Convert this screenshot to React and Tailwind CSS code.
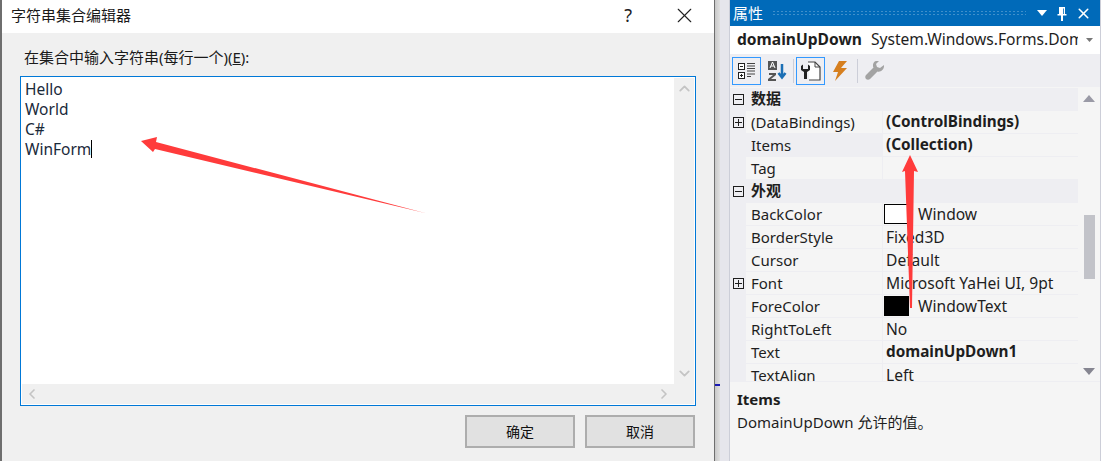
import React from 'react';
import { ChevronUp, ChevronDown, ChevronLeft, ChevronRight, X } from 'lucide-react';

const cjk = { fontFamily: '"Noto Sans", "Noto Sans CJK SC", sans-serif' };

const Expander = ({ open }) => (
  <span className="w-[11px] h-[11px] border border-[#1e1e1e] relative block shrink-0">
    <span className="absolute left-[1px] right-[1px] top-[4px] h-px bg-[#1e1e1e]"></span>
    {!open && <span className="absolute top-[1px] bottom-[1px] left-[4px] w-px bg-[#1e1e1e]"></span>}
  </span>
);

const Category = ({ title }) => (
  <div className="h-[23px] flex items-center bg-[#eeeef2]">
    <div className="w-[16px] flex justify-center"><Expander open /></div>
    <span className="ml-[5px] pb-[2px] font-bold text-[#1e1e1e]">{title}</span>
  </div>
);

const Row = ({ name, value, bold, plus, swatch, active }) => (
  <div className="h-[23px] flex bg-[#eeeef2]">
    <div className="w-[16px] flex justify-center items-center">{plus && <Expander />}</div>
    <div className={`w-[136px] border-b border-[#eeeef2] pl-[5px] flex items-center ${active ? 'bg-[#eeeef2]' : 'bg-[#f5f5f5]'}`}>{name}</div>
    <div className={`w-[195px] ml-px border-b border-[#eeeef2] bg-[#f5f5f5] pl-[3px] flex items-center whitespace-nowrap ${bold ? 'font-bold text-[15.3px] pb-px' : 'text-[15.6px] pt-[2px]'}`}>
      {swatch && <span className={`w-[25px] h-[20px] -ml-[2px] mr-[9px] -mt-[2px] border border-black shrink-0 ${swatch}`}></span>}
      {value}
    </div>
  </div>
);

const rowsA = [
  { name: '(DataBindings)', value: '(ControlBindings)', bold: true, plus: true },
  { name: 'Items', value: '(Collection)', bold: true, active: true },
  { name: 'Tag', value: '' },
];

const rowsB = [
  { name: 'BackColor', value: 'Window', swatch: 'bg-white' },
  { name: 'BorderStyle', value: 'Fixed3D' },
  { name: 'Cursor', value: 'Default' },
  { name: 'Font', value: 'Microsoft YaHei UI, 9pt', plus: true },
  { name: 'ForeColor', value: 'WindowText', swatch: 'bg-black' },
  { name: 'RightToLeft', value: 'No' },
  { name: 'Text', value: 'domainUpDown1', bold: true },
  { name: 'TextAlign', value: 'Left' },
];

const Dialog = () => (
  <div className="w-[715px] h-full shrink-0 flex flex-col bg-[#f0f0f0] border-l-2 border-r border-[#6e6e6e]">
    <div className="h-[33px] pb-[2px] bg-white flex items-center justify-between shrink-0">
      <span className="ml-[9px] text-[15px] text-[#1a1a1a]">字符串集合编辑器</span>
      <div className="flex items-center">
        <span className="text-[18px] text-[#222] mr-[40px]">?</span>
        <X size={25} strokeWidth={1.1} className="mr-[17px] text-[#222]" />
      </div>
    </div>
    <div className="pl-[22px] pt-[13px] text-[15px] leading-[22px] text-[#1a1a1a] h-[43px] shrink-0">
      在集合中输入字符串(每行一个)(<span className="underline">E</span>):
    </div>
    <div className="ml-[18px] w-[676px] h-[330px] border border-[#0078d7] p-px bg-white flex flex-col shrink-0">
      <div className="flex-1 flex min-h-0">
        <div className="flex-1 pl-[3px] pt-[1px] text-[15.5px] leading-[20px] text-[#1a2a3a]">
          <div>Hello</div>
          <div>World</div>
          <div>C#</div>
          <div className="flex items-center">WinForm<span className="w-px h-[18px] bg-black"></span></div>
        </div>
        <div className="w-[20px] bg-[#f0f0f0] flex flex-col justify-between items-center py-[2px]">
          <ChevronUp size={17} strokeWidth={2.5} className="text-[#c4c4c4]" />
          <ChevronDown size={17} strokeWidth={2.5} className="text-[#c4c4c4]" />
        </div>
      </div>
      <div className="h-[20px] bg-[#f0f0f0] flex justify-between items-center pl-[2px] shrink-0">
        <ChevronLeft size={16} strokeWidth={2.5} className="text-[#c4c4c4]" />
        <ChevronRight size={16} strokeWidth={2.5} className="text-[#c4c4c4] mr-[22px]" />
      </div>
    </div>
    <div className="flex justify-end gap-[10px] mt-[9px] mr-[19px]">
      <button className="w-[110px] h-[33px] bg-[#e1e1e1] border-2 border-[#adadad] text-[14px] text-[#111]">确定</button>
      <button className="w-[110px] h-[33px] bg-[#e1e1e1] border-2 border-[#adadad] text-[14px] text-[#111]">取消</button>
    </div>
  </div>
);

const Toolbar = () => (
  <div className="h-[33px] bg-[#eeeef2] flex items-center pl-[2px] shrink-0">
    <span className="w-[29px] h-[28px] border border-[#3399ff] flex items-center justify-center">
      <svg width="18" height="18" viewBox="0 0 18 18">
        <rect x="0.5" y="1.5" width="6" height="6" fill="#fff" stroke="#222" />
        <rect x="0.5" y="10.5" width="6" height="6" fill="#fff" stroke="#222" />
        <path d="M2 4.500h3M2 13.500h3M3.500 12v3" stroke="#222" />
        <path d="M9 1.500h8M9 4h8M9 6.500h8M9 9h8M9 12h8M9 14.500h4" stroke="#444" />
      </svg>
    </span>
    <span className="w-[31px] h-[28px] flex items-center justify-center">
      <svg width="20" height="22" viewBox="0 0 20 22">
        <rect x="1" y="1" width="9" height="9" fill="#555" />
        <path d="M3 8l2.500-6 2.500 6M4 6h3" stroke="#fff" fill="none" />
        <path d="M2 13h7v2l-5 4h5v2H1v-2l5-4H2z" fill="#555" />
        <path d="M15 4v13M11.500 13l3.500 4.500 3.500-4.500" stroke="#1b6fb5" strokeWidth="2.500" fill="none" />
      </svg>
    </span>
    <span className="w-px h-[24px] bg-[#ccced8] ml-px mr-[2px]"></span>
    <span className="w-[29px] h-[28px] border border-[#3399ff] flex items-center justify-center">
      <svg width="21" height="20" viewBox="0 0 21 20">
        <path d="M8 1h7l5 5v13H9" fill="#fff" stroke="#444" strokeWidth="1.200" />
        <path d="M15 1v5h5" fill="none" stroke="#444" />
        <path d="M1 5v4l3 2v7h3v-7l3-2V5L8 3.500V8H3V3.500z" fill="#222" />
      </svg>
    </span>
    <span className="w-[30px] h-[28px] flex items-center justify-center">
      <svg width="16" height="20" viewBox="0 0 16 20">
        <path d="M7 0h8L9 7h6L3 20l3-9H1z" fill="#d67f1f" />
      </svg>
    </span>
    <span className="w-px h-[24px] bg-[#ccced8] ml-[2px] mr-[7px]"></span>
    <span className="w-[20px] flex items-center justify-center">
      <svg width="20" height="20" viewBox="0 0 20 20">
        <path d="M19 4l-4 3-3-1-1-3 3-3c-3-1-6 1-6 4 0 1 0 2 .5 2.500L1 14c-1 1-1 3 0 4s3 1 4 0l7.500-7.500c3 1 7-2 6.500-6.500z" fill="#a3a3a3" />
      </svg>
    </span>
  </div>
);

const Properties = () => (
  <div className="flex-1 h-full flex flex-col border-l border-r border-[#ccced8] bg-[#f5f5f5] text-[15px] text-[#1e1e1e]">
    <div className="h-[26px] bg-[#006ab9] flex items-center text-white shrink-0 pl-[3px]">
      <span className="text-[15px]">属性</span>
      <div className="w-[254px] h-[6px] ml-[9px] bg-[radial-gradient(#3f8fcb_1px,transparent_1px)] bg-[length:4px_3px]"></div>
      <svg width="10" height="6" viewBox="0 0 10 6" className="ml-[11px]"><path d="M0 0h10L5 6z" fill="#fff" /></svg>
      <svg width="10" height="15" viewBox="0 0 10 15" className="ml-[10px]"><path d="M2 1h6v7h1.500v1.500h-3.500V15H4V9.500H.5V8H2zM6 2.500v5.500h.8V2.500z" fill="#fff" /></svg>
      <X size={17} strokeWidth={2.2} className="ml-[8px]" />
    </div>
    <div className="h-[28px] bg-white flex items-center pl-[7px] shrink-0 overflow-hidden text-[15.6px]">
      <span className="font-bold whitespace-nowrap">domainUpDown</span>
      <span className="ml-[9px] w-[207px] overflow-hidden whitespace-nowrap">System.Windows.Forms.DomainUpDown</span>
      <svg width="7" height="4" viewBox="0 0 7 4" className="ml-[8px]"><path d="M0 0h7L3.500 4z" fill="#777" /></svg>
    </div>
    <Toolbar />
    <div className="flex-1 flex min-h-0 overflow-hidden">
      <div className="w-[348px] pt-px overflow-hidden">
        <Category title="数据" />
        {rowsA.map((r) => <Row key={r.name} {...r} />)}
        <Category title="外观" />
        {rowsB.map((r) => <Row key={r.name} {...r} />)}
      </div>
      <div className="flex-1 flex flex-col items-center pt-[8px]">
        <svg width="12" height="7" viewBox="0 0 12 7"><path d="M0 7h12L6 0z" fill="#9a9aa6" /></svg>
        <div className="w-[11px] h-[64px] mt-[113px] bg-[#c2c3c9]"></div>
        <svg width="12" height="7" viewBox="0 0 12 7" className="mt-[89px]"><path d="M0 0h12L6 7z" fill="#868691" /></svg>
      </div>
    </div>
    <div className="h-[80px] border-t border-[#eeeef2] px-[7px] pt-[6px] shrink-0 leading-[23px]">
      <div className="font-bold">Items</div>
      <div>DomainUpDown 允许的值。</div>
    </div>
  </div>
);

export default function App() {
  return (
    <div className="w-[1110px] h-[461px] relative flex overflow-hidden bg-white" style={cjk}>
      <Dialog />
      {/* bit of the window behind the two panels */}
      <div className="w-[14px] h-full shrink-0 relative bg-[#e6e6ec]">
        <div className="w-[5px] h-full bg-gradient-to-r from-[#c8c8c8] to-[#e0e0e0]"></div>
        <div className="absolute left-0 top-[384px] w-[5px] h-[2px] bg-[#1a1ab4]"></div>
      </div>
      <div className="w-[372px] h-full shrink-0"><Properties /></div>
      <div className="flex-1 bg-white"></div>
      {/* annotation arrows drawn over the screenshot */}
      <svg className="absolute inset-0 pointer-events-none" width="1110" height="461" viewBox="0 0 1110 461">
        <path d="M141 141L157 137L156 142L425 213L155 149L153 152Z" fill="#ff3b3b" />
        <path d="M910 155L918 172L914 171L912 308L910 308L905 171L902 172Z" fill="#ff3b3b" />
      </svg>
    </div>
  );
}
